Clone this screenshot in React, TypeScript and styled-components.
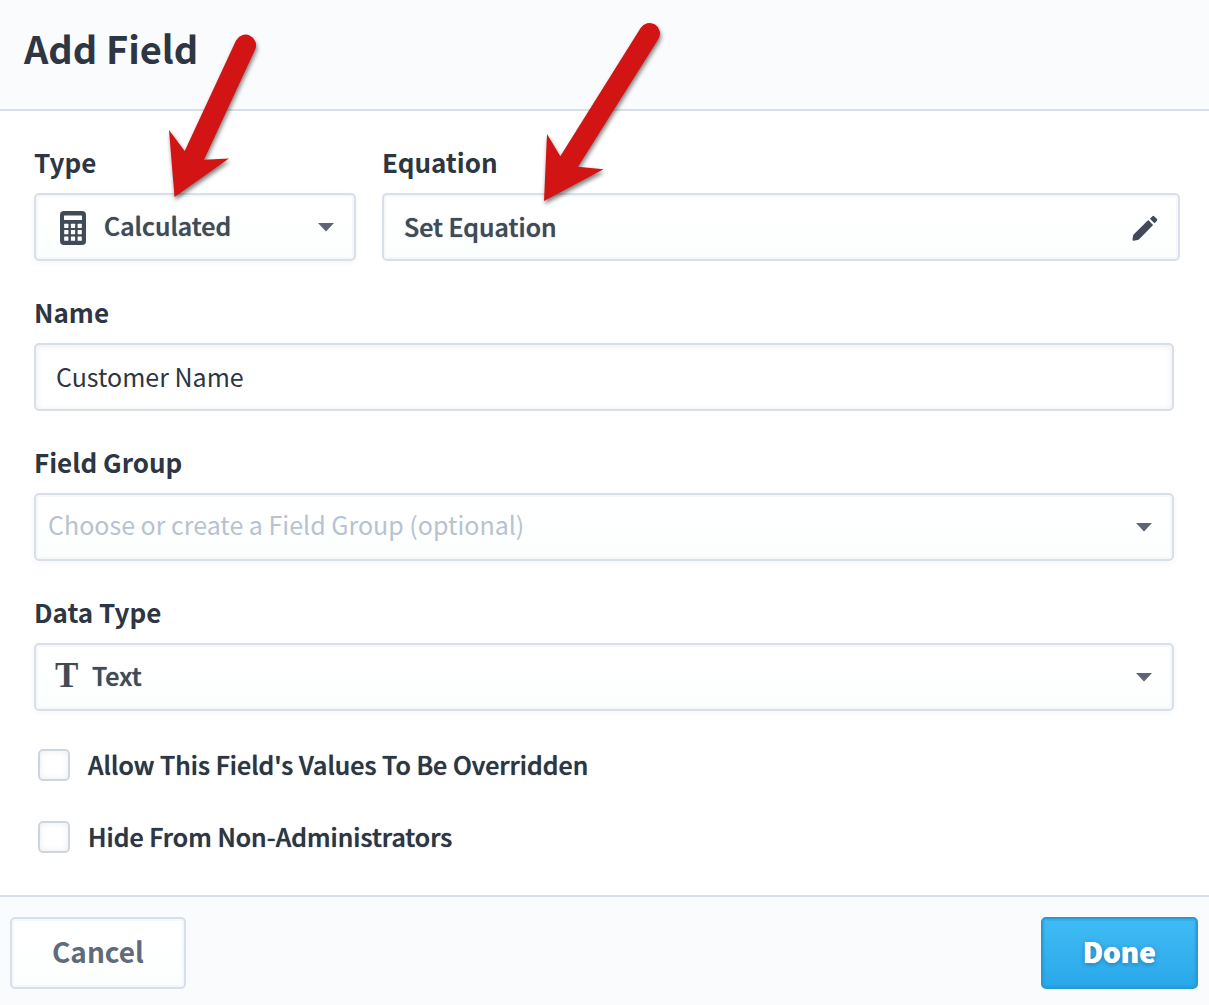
import React, { useState } from "react";
import styled, { createGlobalStyle, css } from "styled-components";

const color = {
  ink: "#2d3642",
  control: "#414b57",
  muted: "#5f6b7a",
  placeholder: "#b8c2d0",
  border: "#d8dfe8",
  bar: "#fafbfd",
  caret: "#5d6473",
  arrow: "#d21414",
};

const GlobalStyle = createGlobalStyle`
  *, *::before, *::after { box-sizing: border-box; }
  body {
    margin: 0;
    background: #fff;
    color: ${color.ink};
    font-family: "Noto Sans CJK SC", "Noto Sans", sans-serif;
    font-size: 25px;
  }
  button, input, select { font: inherit; color: inherit; margin: 0; }
`;

const Dialog = styled.form`
  position: relative;
  display: flex;
  flex-direction: column;
  min-height: 100vh;
  overflow: hidden;
`;

const Header = styled.header`
  padding: 20px 24px 33px;
  background: ${color.bar};
  border-bottom: 2px solid ${color.border};
`;

const Title = styled.h1`
  margin: 0;
  font-size: 38px;
  line-height: 56px;
  font-weight: 600;
`;

const Body = styled.main`
  flex: 1;
  display: flex;
  flex-direction: column;
  gap: 32px;
  padding: 32px 35px 36px 34px;
`;

const FieldRow = styled.div`
  display: flex;
  gap: 26px;
  margin-right: -6px;
`;

const Field = styled.div<{ $width?: number }>`
  display: flex;
  flex-direction: column;
  gap: 12px;
  min-width: 0;
  flex: ${(p) => (p.$width ? `0 0 ${p.$width}px` : "1")};
`;

const Label = styled.label`
  font-size: 26px;
  line-height: 38px;
  font-weight: 600;
`;

const Stack = styled.div`
  display: grid;
  align-items: center;
  > * { grid-area: 1 / 1; }
`;

const Lead = styled.span<{ $inset: number }>`
  display: flex;
  justify-self: start;
  margin-left: ${(p) => p.$inset}px;
  color: ${color.control};
  pointer-events: none;
`;

const Trail = styled.span`
  display: flex;
  justify-self: end;
  margin-right: 22px;
  color: ${color.caret};
  pointer-events: none;
`;

/* A semibold: the medium cut, thickened at the edges. */
const semibold = css`
  font-weight: 500;
  text-shadow: 0 0 1px currentColor;
`;

const box = css`
  width: 100%;
  height: 68px;
  border: 2px solid ${color.border};
  border-radius: 5px;
  line-height: 40px;
  outline: none;
`;

const raised = css`
  ${box}
  background: linear-gradient(#fff, #fcfefe);
  box-shadow: inset 0 0 0 2px #f5f8fb, 0 2px 6px rgba(45, 54, 66, 0.05);
`;

const Select = styled.select<{ $inset: number }>`
  ${raised}
  ${semibold}
  appearance: none;
  padding: 0 60px 4px ${(p) => p.$inset}px;
  color: ${color.control};
`;

const Combo = styled.input`
  ${raised}
  padding: 0 60px 6px 12px;
  &::placeholder { color: ${color.placeholder}; opacity: 1; }
`;

const EquationButton = styled.button`
  ${raised}
  ${semibold}
  display: flex;
  align-items: center;
  justify-content: space-between;
  padding: 0 20px 2px;
  box-shadow: inset 0 0 0 2px #f5f8fb;
  color: ${color.control};
`;

const TextInput = styled.input`
  ${box}
  padding: 0 20px 2px;
  background: #fff;
  box-shadow: inset 0 1px 6px rgba(45, 54, 66, 0.1);
`;

const SerifT = styled.span`
  padding-bottom: 2px;
  font-family: "Liberation Serif", serif;
  font-size: 35px;
  line-height: 40px;
  font-weight: 700;
`;

const Options = styled.div`
  display: flex;
  flex-direction: column;
  gap: 28px;
`;

const Option = styled.label`
  ${semibold}
  display: flex;
  align-items: center;
  gap: 18px;
  padding-left: 4px;
  line-height: 44px;
`;

const OptionText = styled.span`
  line-height: 42px;
  padding-bottom: 2px;
`;

const Check = styled.input`
  appearance: none;
  flex: none;
  width: 32px;
  height: 32px;
  border: 2px solid #cfd5de;
  border-radius: 5px;
  background: #fff;
  box-shadow: inset 0 0 6px rgba(45, 54, 66, 0.1);
  &:checked { background: #2eaaea; }
`;

const Footer = styled.footer`
  display: flex;
  justify-content: space-between;
  padding: 20px 11px 16px 10px;
  background: ${color.bar};
  border-top: 2px solid ${color.border};
`;

const Action = styled.button<{ $primary?: boolean }>`
  height: 72px;
  padding: 0 40px 4px;
  border: 2px solid ${color.border};
  border-radius: 5px;
  background: linear-gradient(#fff, #fcfefe);
  box-shadow: inset 0 0 0 2px #f5f8fb;
  color: ${color.muted};
  font-size: 28px;
  line-height: 40px;
  font-weight: 600;
  ${(p) =>
    p.$primary &&
    css`
      border-color: #2b98d2;
      background: linear-gradient(#40bbf4, #29a8ea);
      box-shadow: inset 0 0 0 2px rgba(20, 140, 210, 0.2);
      color: #fff;
      font-weight: 900;
      text-shadow: 0 0 1px #fff, 0 1px 4px rgba(0, 70, 120, 0.6);
    `}
`;

const Arrows = styled.svg`
  position: absolute;
  top: 0;
  left: 0;
  pointer-events: none;
  filter: drop-shadow(1px 3px 2px rgba(0, 0, 0, 0.5));
`;

const Caret = () => (
  <svg width="16" height="10" viewBox="0 0 16 10" aria-hidden="true">
    <path d="M0 1h16L8 9.5z" fill="currentColor" />
  </svg>
);

const Calculator = () => (
  <svg width="26" height="36" viewBox="0 -2 26 36" aria-hidden="true">
    <rect width="26" height="34" rx="4" fill="currentColor" />
    <rect x="4" y="4.5" width="18" height="4.5" rx="0.5" fill="#fff" />
    {[12.7, 19.1, 25.5].map((y) =>
      [4.2, 10.9, 17.6].map((x) => (
        <rect key={`${x}-${y}`} x={x} y={y} width="4.2" height="4.2" rx="0.5" fill="#fff" />
      )),
    )}
  </svg>
);

const Pencil = () => (
  <svg width="26" height="30" viewBox="0 -4 26 30" aria-hidden="true">
    <path
      d="M20.2 1.4q1.1-1.1 2.2 0l2.4 2.4q1.1 1.1 0 2.2l-2.3 2.3-4.6-4.6z"
      fill="currentColor"
    />
    <path
      d="M16.3 5.1l4.8 4.8L7.4 23.9Q6.6 24.8 5.4 25L1.8 25.7Q0.3 25.9 0.5 24.4L1 21Q1.2 19.9 2.1 19.1z"
      fill="currentColor"
    />
  </svg>
);

export default function App() {
  const [name, setName] = useState("Customer Name");
  const [group, setGroup] = useState("");

  return (
    <>
      <GlobalStyle />
      <Dialog onSubmit={(e: React.FormEvent) => e.preventDefault()}>
        <Header>
          <Title>Add Field</Title>
        </Header>

        <Body>
          <FieldRow>
            <Field $width={322}>
              <Label htmlFor="type">Type</Label>
              <Stack>
                <Select id="type" $inset={68}>
                  <option>Calculated</option>
                </Select>
                <Lead $inset={26}>
                  <Calculator />
                </Lead>
                <Trail>
                  <Caret />
                </Trail>
              </Stack>
            </Field>
            <Field>
              <Label htmlFor="equation">Equation</Label>
              <EquationButton id="equation" type="button">
                Set Equation
                <Pencil />
              </EquationButton>
            </Field>
          </FieldRow>

          <Field>
            <Label htmlFor="name">Name</Label>
            <TextInput id="name" value={name} onChange={(e) => setName(e.target.value)} />
          </Field>

          <Field>
            <Label htmlFor="group">Field Group</Label>
            <Stack>
              <Combo
                id="group"
                role="combobox"
                aria-expanded={false}
                placeholder="Choose or create a Field Group (optional)"
                value={group}
                onChange={(e) => setGroup(e.target.value)}
              />
              <Trail>
                <Caret />
              </Trail>
            </Stack>
          </Field>

          <Field>
            <Label htmlFor="data-type">Data Type</Label>
            <Stack>
              <Select id="data-type" $inset={56}>
                <option>Text</option>
              </Select>
              <Lead $inset={21}>
                <SerifT aria-hidden="true">T</SerifT>
              </Lead>
              <Trail>
                <Caret />
              </Trail>
            </Stack>
          </Field>

          <Options>
            <Option>
              <Check type="checkbox" />
              <OptionText>Allow This Field's Values To Be Overridden</OptionText>
            </Option>
            <Option>
              <Check type="checkbox" />
              <OptionText>Hide From Non-Administrators</OptionText>
            </Option>
          </Options>
        </Body>

        <Footer>
          <Action type="button">Cancel</Action>
          <Action type="submit" $primary>
            Done
          </Action>
        </Footer>

        <Arrows width="680" height="220" viewBox="0 0 680 220" aria-hidden="true">
          <path
            d="M174.5 197L169 130l15.7 21L236 40.6a10.5 10.5 0 0 1 19 9.2L204 159.7l25-1.2z"
            fill={color.arrow}
          />
          <path
            d="M544 201l3-67 13.3 22.3L640.6 27.9a10.5 10.5 0 0 1 17.8 11.2L578 166.7l25.5 2.6z"
            fill={color.arrow}
          />
        </Arrows>
      </Dialog>
    </>
  );
}
